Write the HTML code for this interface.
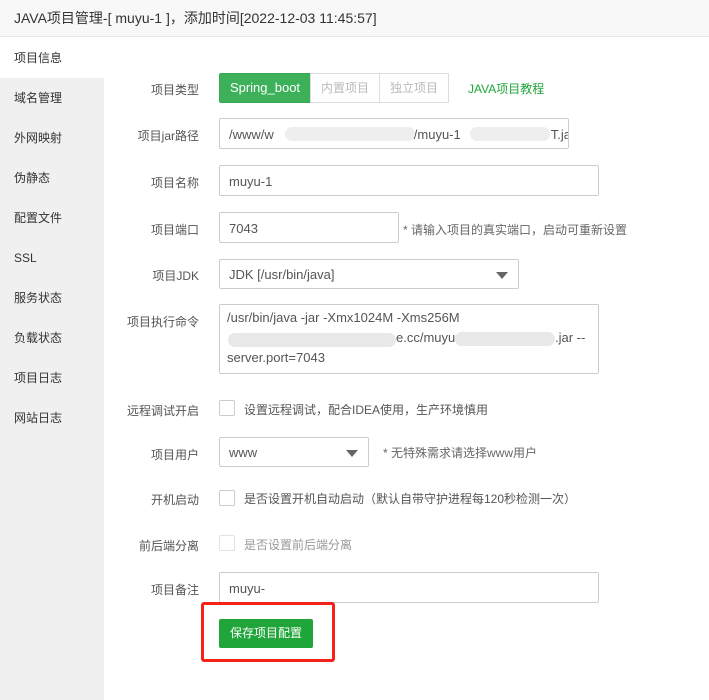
<!DOCTYPE html>
<html><head><meta charset="utf-8"><style>
*{margin:0;padding:0;box-sizing:border-box}
body{width:709px;height:700px;background:#fff;font-family:"Liberation Sans","Noto Sans CJK SC",sans-serif;color:#333;position:relative;overflow:hidden;font-size:12px}
.a{position:absolute;white-space:nowrap}
.hd{left:0;top:0;width:709px;height:37px;background:#f8f8f8;border-bottom:1px solid #e6e6e6;font-size:14px;line-height:36px;padding-left:14px;color:#333}
.sb{left:0;top:38px;width:104px;height:662px;background:#f0f0f0}
.si{position:absolute;left:0;width:104px;height:40px;line-height:40px;padding-left:14px;font-size:12px;color:#333}
.lb{width:199px;left:0;text-align:right;font-size:12px;color:#555}
.in{border:1px solid #ccc;border-radius:2px;height:31px;line-height:31px;padding-left:9px;font-size:13px;color:#555;background:#fff}
.cb{width:16px;height:16px;border:1px solid #ccc;border-radius:2px;background:#fff}
.tip{font-size:12px;color:#666}
.caret{position:absolute;right:10px;top:12px;width:0;height:0;border-left:6px solid transparent;border-right:6px solid transparent;border-top:7px solid #666}
.blur{position:absolute;background:#eee;height:14px;border-radius:7px}
.t{position:absolute;font-size:13px;color:#555;white-space:nowrap;line-height:20px}
</style></head><body>
<div class="a hd">JAVA项目管理-[ muyu-1 ]，添加时间[2022-12-03 11:45:57]</div>
<div class="a sb">
<div class="si" style="top:0;background:#fff">项目信息</div>
<div class="si" style="top:40px">域名管理</div>
<div class="si" style="top:80px">外网映射</div>
<div class="si" style="top:120px">伪静态</div>
<div class="si" style="top:160px">配置文件</div>
<div class="si" style="top:200px">SSL</div>
<div class="si" style="top:240px">服务状态</div>
<div class="si" style="top:280px">负载状态</div>
<div class="si" style="top:320px">项目日志</div>
<div class="si" style="top:360px">网站日志</div>
</div>

<div class="a lb" style="top:81px">项目类型</div>
<div class="a" style="left:219px;top:73px;width:92px;height:30px;background:#3cb15a;border:1px solid #3aa855;border-radius:2px 0 0 2px;color:#fff;font-size:13px;line-height:28px;text-align:center">Spring_boot</div>
<div class="a" style="left:310px;top:73px;width:70px;height:30px;border:1px solid #ddd;color:#bbb;font-size:12px;line-height:28px;text-align:center">内置项目</div>
<div class="a" style="left:379px;top:73px;width:70px;height:30px;border:1px solid #ddd;color:#bbb;font-size:12px;line-height:28px;text-align:center">独立项目</div>
<div class="a" style="left:468px;top:80px;color:#20a53a;font-size:12px">JAVA项目教程</div>

<div class="a lb" style="top:127px">项目jar路径</div>
<div class="a in" style="left:219px;top:118px;width:350px;overflow:hidden">/www/w<span style="display:inline-block;width:140px"></span>/muyu-1<span style="display:inline-block;width:90px"></span>T.ja</div>
<div class="blur" style="left:285px;top:127px;width:130px"></div>
<div class="blur" style="left:470px;top:127px;width:80px"></div>

<div class="a lb" style="top:174px">项目名称</div>
<div class="a in" style="left:219px;top:165px;width:380px">muyu-1</div>

<div class="a lb" style="top:221px">项目端口</div>
<div class="a in" style="left:219px;top:212px;width:180px">7043</div>
<div class="a tip" style="left:403px;top:221px">* 请输入项目的真实端口，启动可重新设置</div>

<div class="a lb" style="top:267px">项目JDK</div>
<div class="a in" style="left:219px;top:259px;width:300px;height:30px;line-height:30px">JDK [/usr/bin/java]<span class="caret"></span></div>

<div class="a lb" style="top:313px">项目执行命令</div>
<div class="a" style="left:219px;top:304px;width:380px;height:70px;border:1px solid #ccc;border-radius:2px"></div>
<div class="t" style="left:227px;top:308px">/usr/bin/java -jar -Xmx1024M -Xms256M</div>
<div class="blur" style="left:228px;top:333px;width:168px;background:#e8e8e8"></div>
<div class="t" style="left:396px;top:328px">e.cc/muyu-</div>
<div class="blur" style="left:455px;top:332px;width:100px;background:#e8e8e8"></div>
<div class="t" style="left:555px;top:328px">.jar --</div>
<div class="t" style="left:227px;top:348px">server.port=7043</div>

<div class="a lb" style="top:402px">远程调试开启</div>
<div class="a cb" style="left:219px;top:400px"></div>
<div class="a" style="left:244px;top:401px;font-size:12px;color:#555">设置远程调试，配合IDEA使用，生产环境慎用</div>

<div class="a lb" style="top:446px">项目用户</div>
<div class="a in" style="left:219px;top:437px;width:150px;height:30px;line-height:30px">www<span class="caret"></span></div>
<div class="a tip" style="left:383px;top:444px">* 无特殊需求请选择www用户</div>

<div class="a lb" style="top:491px">开机启动</div>
<div class="a cb" style="left:219px;top:490px"></div>
<div class="a" style="left:244px;top:490px;font-size:12px;color:#555">是否设置开机自动启动（默认自带守护进程每120秒检测一次）</div>

<div class="a lb" style="top:537px">前后端分离</div>
<div class="a cb" style="left:219px;top:535px;border-color:#e2e2e2"></div>
<div class="a" style="left:244px;top:536px;font-size:12px;color:#999">是否设置前后端分离</div>

<div class="a lb" style="top:581px">项目备注</div>
<div class="a in" style="left:219px;top:572px;width:380px">muyu-</div>

<div class="a" style="left:201px;top:602px;width:134px;height:60px;border:3px solid #f5221b;border-radius:3px"></div>
<div class="a" style="left:219px;top:619px;width:94px;height:29px;background:#20a53a;border-radius:2px;color:#fff;font-size:12px;line-height:29px;text-align:center">保存项目配置</div>
</body></html>
